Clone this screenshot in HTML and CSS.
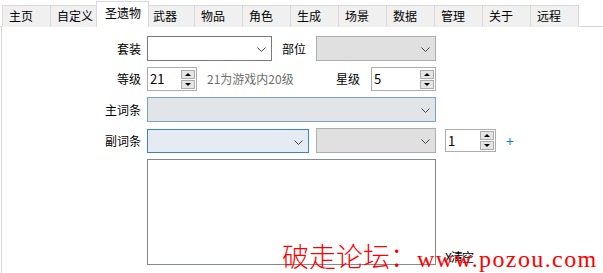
FILE: index.html
```html
<!DOCTYPE html>
<html>
<head>
<meta charset="utf-8">
<link rel="stylesheet" href="styles.css">
</head>
<body>
<div class="tabs">
  <div class="tab">主页</div>
  <div class="tab">自定义</div>
  <div class="tab active">圣遗物</div>
  <div class="tab">武器</div>
  <div class="tab">物品</div>
  <div class="tab">角色</div>
  <div class="tab">生成</div>
  <div class="tab">场景</div>
  <div class="tab">数据</div>
  <div class="tab">管理</div>
  <div class="tab">关于</div>
  <div class="tab">远程</div>
</div>
<div class="panel">
  <div class="form">
    <label class="lbl">套装</label>
    <div class="row r1">
      <div class="select w125"><svg class="chev" width="9" height="5" viewBox="0 0 9 5"><polyline points="0.5,0.5 4.5,4.5 8.5,0.5" fill="none" stroke="#444" stroke-width="1"/></svg></div>
      <label class="lbl inline">部位</label>
      <div class="select disabled w120"><svg class="chev" width="9" height="5" viewBox="0 0 9 5"><polyline points="0.5,0.5 4.5,4.5 8.5,0.5" fill="none" stroke="#444" stroke-width="1"/></svg></div>
    </div>

    <label class="lbl">等级</label>
    <div class="row r2">
      <div class="group">
        <div class="num w50"><span class="val">21</span>
          <div class="spin"><div class="sb"><span class="up"></span></div><div class="sb"><span class="down"></span></div></div>
        </div>
        <span class="note">21为游戏内20级</span>
      </div>
      <div class="group g2">
        <label class="lbl inline">星级</label>
        <div class="num w65"><span class="val">5</span>
          <div class="spin"><div class="sb"><span class="up"></span></div><div class="sb"><span class="down"></span></div></div>
        </div>
      </div>
    </div>

    <label class="lbl">主词条</label>
    <div class="row">
      <div class="select main w289"><svg class="chev" width="9" height="5" viewBox="0 0 9 5"><polyline points="0.5,0.5 4.5,4.5 8.5,0.5" fill="none" stroke="#444" stroke-width="1"/></svg></div>
    </div>

    <label class="lbl">副词条</label>
    <div class="row r4">
      <div class="select focus w162"><svg class="chev" width="9" height="5" viewBox="0 0 9 5"><polyline points="0.5,0.5 4.5,4.5 8.5,0.5" fill="none" stroke="#444" stroke-width="1"/></svg></div>
      <div class="select disabled w120"><svg class="chev" width="9" height="5" viewBox="0 0 9 5"><polyline points="0.5,0.5 4.5,4.5 8.5,0.5" fill="none" stroke="#444" stroke-width="1"/></svg></div>
      <div class="num w51"><span class="val">1</span>
        <div class="spin"><div class="sb"><span class="up"></span></div><div class="sb"><span class="down"></span></div></div>
      </div>
      <span class="plus">+</span>
    </div>

    <span class="lbl"></span>
    <div class="row r5">
      <div class="textarea"></div>
      <span class="clear">X清空</span>
    </div>
  </div>
</div>
<div class="watermark"><span class="cjk">破走论坛：</span><span class="url">www.pozou.com</span></div>
</body>
</html>
```
FILE: styles.css
```css
html, body {
  margin: 0;
  padding: 0;
  overflow: hidden;
  width: 603px;
  height: 273px;
  background: #ffffff;
  font-family: "Noto Sans CJK SC", "Noto Sans", sans-serif;
  font-size: 12px;
  color: #000;
}
.tabs {
  display: flex;
  align-items: flex-end;
  height: 27px;
  padding-left: 3px;
  box-sizing: border-box;
  border-bottom: 1px solid #d9d9d9;
  position: relative;
}
.tab {
  box-sizing: border-box;
  width: 49px;
  height: 22px;
  margin-left: -1px;
  margin-bottom: -1px;
  border: 1px solid #d9d9d9;
  border-bottom: none;
  background: #f0f0f0;
  padding-left: 6px;
  line-height: 20px;
  white-space: nowrap;
}
.tab.active {
  width: 53px;
  height: 26px;
  margin-left: -3px;
  margin-right: -2px;
  background: #ffffff;
  padding-left: 8px;
  line-height: 22px;
  position: relative;
  z-index: 2;
}
.panel {
  margin-left: 1px;
  border-left: 1px solid #dcdcdc;
  height: 260px;
  padding-top: 9px;
  box-sizing: border-box;
}
.form {
  display: grid;
  grid-template-columns: 139px 289px;
  column-gap: 6px;
  row-gap: 6px;
  align-items: center;
}
.lbl {
  text-align: right;
  white-space: nowrap;
  line-height: 16px;
}
.lbl.inline { text-align: left; }
.row {
  display: flex;
  align-items: center;
  white-space: nowrap;
}
.r1 .lbl.inline { margin-left: 10px; margin-right: 10px; }
.select {
  box-sizing: border-box;
  height: 25px;
  border: 1px solid #7a7a7a;
  background: #ffffff;
  position: relative;
  flex: none;
}
.select .chev {
  position: absolute;
  right: 5px;
  top: 10px;
}
.select.disabled { background: #e0e0e0; border-color: #adadad; }
.select.main { background: #e2e5e8; border-color: #7ba2c9; }
.select.focus { background: #e5ebf3; border-color: #3d84c6; height: 24px; }
.w125 { width: 125px; }
.w120 { width: 120px; }
.w289 { width: 289px; }
.w162 { width: 162px; }
.w50 { width: 50px; }
.w51 { width: 51px; }
.w65 { width: 65px; }
.r2 { justify-content: space-between; }
.group { display: flex; align-items: center; }
.g2 .lbl.inline { margin-right: 11px; }
.num {
  box-sizing: border-box;
  height: 24px;
  border: 1px solid #adadad;
  background: #fff;
  display: flex;
  align-items: center;
  justify-content: space-between;
  padding: 0 1px 0 2px;
  flex: none;
}
.val {
  font-size: 13px;
  line-height: 16px;
}
.spin {
  display: flex;
  flex-direction: column;
  gap: 1px;
  width: 14px;
}
.sb {
  box-sizing: border-box;
  height: 9px;
  border: 1px solid #acacac;
  background: #e5e5e5;
  display: flex;
  align-items: center;
  justify-content: center;
}
.up {
  width: 0; height: 0;
  border-left: 3px solid transparent;
  border-right: 3px solid transparent;
  border-bottom: 3px solid #000;
}
.down {
  width: 0; height: 0;
  border-left: 3px solid transparent;
  border-right: 3px solid transparent;
  border-top: 3px solid #000;
}
.note {
  color: #6d6d6d;
  margin-left: 10px;
  line-height: 16px;
}
.r4 .select.disabled { margin-left: 7px; }
.r4 .num { margin-left: 9px; height: 23px; }
.plus {
  color: #1a7fe0;
  font-size: 14px;
  margin-left: 10px;
  line-height: 16px;
}
.r5 { align-items: flex-end; overflow: visible; }
.textarea {
  box-sizing: border-box;
  flex: none;
  width: 289px;
  height: 106px;
  border: 1px solid #828790;
  background: #fff;
}
.clear {
  margin-left: 9px;
  line-height: 14px;
  margin-bottom: 1px;
  letter-spacing: -1px;
}
.watermark {
  position: absolute;
  left: 282px;
  top: 242px;
  color: #ff0000;
  line-height: 27px;
  white-space: nowrap;
  z-index: 5;
}
.watermark .cjk {
  font-family: "Noto Sans CJK SC", sans-serif;
  font-size: 27px;
  font-weight: 300;
}
.watermark .url {
  font-family: "Liberation Serif", serif;
  font-size: 24px;
  letter-spacing: 1.4px;
}
```
